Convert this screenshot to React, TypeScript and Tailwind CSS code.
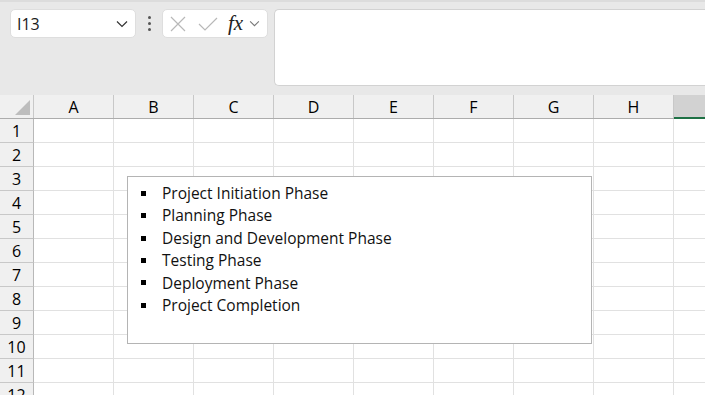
import React from 'react';

const columns = ['A', 'B', 'C', 'D', 'E', 'F', 'G', 'H'];
const rows = Array.from({ length: 12 }, (_, i) => i + 1);
const phases = [
  'Project Initiation Phase',
  'Planning Phase',
  'Design and Development Phase',
  'Testing Phase',
  'Deployment Phase',
  'Project Completion',
];

function Chevron({ className }: { className?: string }) {
  return (
    <svg viewBox="0 0 12 8" className={className} fill="none" stroke="currentColor" strokeWidth="1.2">
      <path d="M1 1.5l5 5 5-5" />
    </svg>
  );
}

function FormulaBar() {
  return (
    <div className="h-[95px] bg-[#e8e8e8] flex items-start pt-[9px] pl-[10px] border-t-2 border-[#dcdcdc]">
      <div className="w-[126px] h-[29px] bg-white rounded-[5px] border border-[#dedede] flex items-center pl-[6px] pr-[7px] -mt-[2px]">
        <span className="text-[16px] text-[#1a1a1a] flex-1">I13</span>
        <Chevron className="w-[12px] h-[8px] text-[#333]" />
      </div>
      <div className="w-[26px] h-[29px] flex flex-col items-center justify-center gap-[3px] -mt-[2px]">
        <span className="w-[3px] h-[3px] bg-[#555] rounded-full" />
        <span className="w-[3px] h-[3px] bg-[#555] rounded-full" />
        <span className="w-[3px] h-[3px] bg-[#555] rounded-full" />
      </div>
      <div className="w-[106px] h-[29px] bg-white rounded-[5px] border border-[#dedede] flex items-center pl-[7px] -mt-[2px]">
        <svg viewBox="0 0 16 16" className="w-[16px] h-[16px] text-[#b8b8b8]" fill="none" stroke="currentColor" strokeWidth="1.2">
          <path d="M1 1l14 14M15 1L1 15" />
        </svg>
        <svg viewBox="0 0 20 14" className="w-[20px] h-[14px] ml-[12px] text-[#b8b8b8]" fill="none" stroke="currentColor" strokeWidth="1.2">
          <path d="M1 7l6 6L19 1" />
        </svg>
        <span className="ml-[10px] text-[21px] italic text-[#222] leading-none" style={{ fontFamily: '"Liberation Serif", serif' }}>
          fx
        </span>
        <Chevron className="ml-[6px] w-[11px] h-[7px] text-[#777]" />
      </div>
      <div className="ml-[6px] flex-1 h-[77px] bg-white rounded-l-[5px] border border-r-0 border-[#d2d2d2] -mt-[2px]" />
    </div>
  );
}

export default function App() {
  return (
    <div className="w-[705px] h-[395px] overflow-hidden bg-white" style={{ fontFamily: '"Open Sans", "Noto Sans", sans-serif' }}>
      <FormulaBar />
      <div className="relative">
        <div className="flex h-[24px] bg-[#f0f0f0] border-b border-[#acacac]">
          <div className="w-[34px] shrink-0 border-r border-[#c8c8c8] relative">
            <svg viewBox="0 0 15 15" className="absolute left-[15px] top-[5px] w-[15px] h-[15px]">
              <path d="M15 0L15 15L0 15Z" fill="#bdbdbd" />
            </svg>
          </div>
          {columns.map((c) => (
            <div key={c} className="w-[80px] shrink-0 border-r border-[#c8c8c8] flex items-center justify-center text-[16px] text-black">
              {c}
            </div>
          ))}
          <div className="flex-1 bg-[#d2d2d2] border-b-2 border-[#1e7145] -mb-px" />
        </div>
        {rows.map((r) => (
          <div key={r} className="flex h-[24px] border-b border-[#e1e1e1]">
            <div className="w-[34px] shrink-0 bg-[#f0f0f0] border-r border-[#b8b8b8] border-b border-b-[#c8c8c8] -mb-px flex items-center justify-center text-[16px] text-black">
              {r}
            </div>
            {columns.map((c) => (
              <div key={c} className="w-[80px] shrink-0 border-r border-[#e1e1e1]" />
            ))}
            <div className="flex-1" />
          </div>
        ))}
        <div className="absolute left-[127px] top-[81px] w-[465px] h-[168px] bg-white border border-[#b4b4b4] pt-[5px] pl-[13px]">
          <ul className="text-[15.5px] leading-[22.4px] text-[#111]">
            {phases.map((p) => (
              <li key={p} className="flex items-center">
                <span className="w-[5px] h-[5px] bg-black shrink-0" />
                <span className="ml-[16px]">{p}</span>
              </li>
            ))}
          </ul>
        </div>
      </div>
    </div>
  );
}
